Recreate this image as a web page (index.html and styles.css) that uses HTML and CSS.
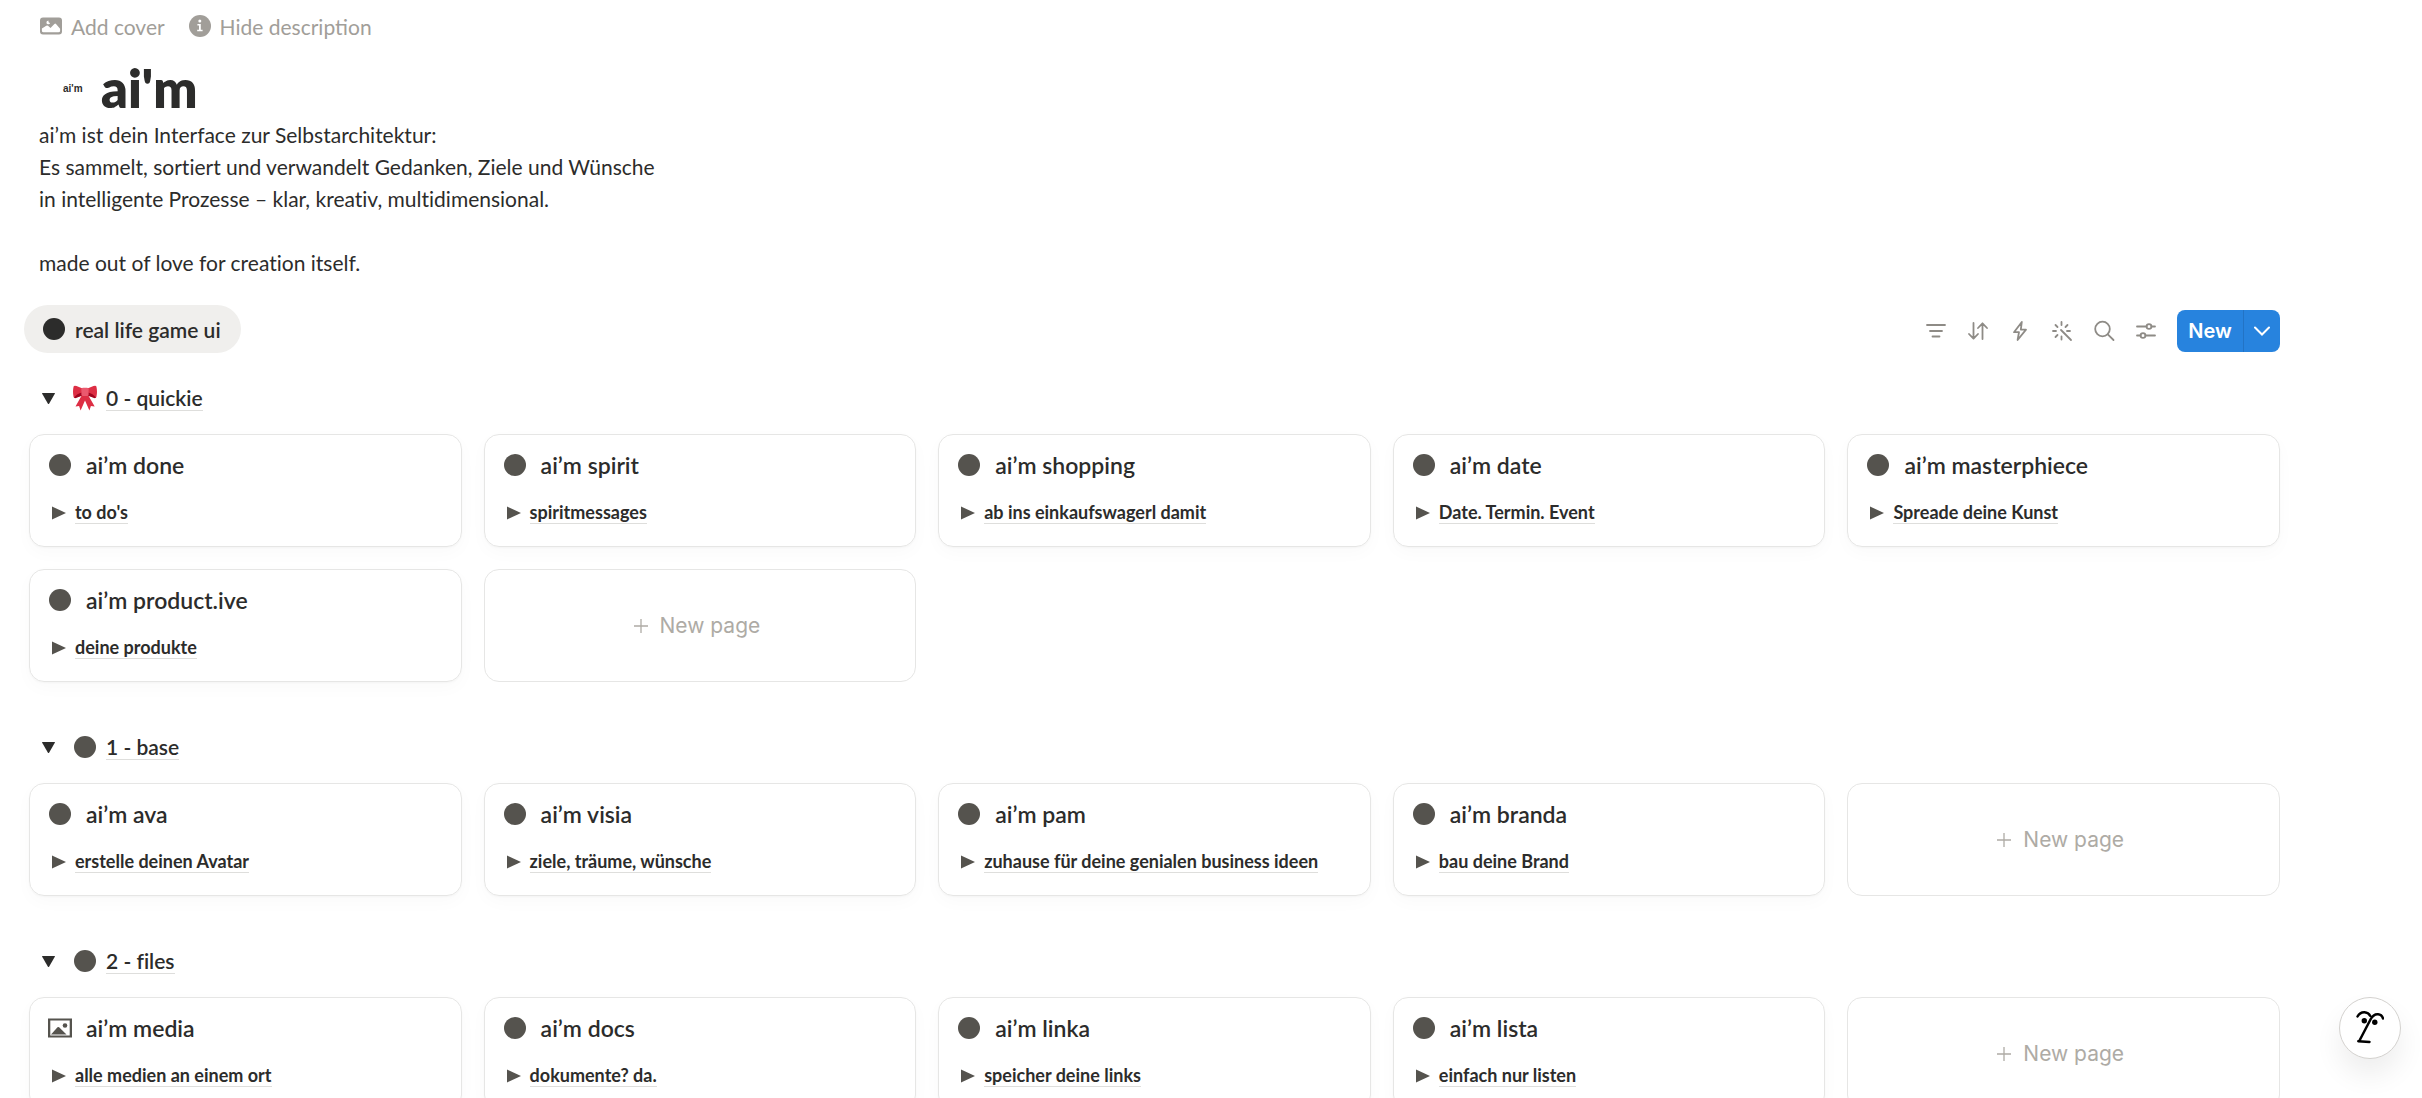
FILE: index.html
```
<!DOCTYPE html>
<html lang="de">
<head>
  <meta charset="UTF-8" />
  <meta name="viewport" content="width=device-width, initial-scale=1.0" />
  <title>ai'm</title>
  <link rel="stylesheet" href="styles.css">
</head>
<body>
  <!-- shared icons -->
  <svg class="sprite" aria-hidden="true">
    <symbol id="dot" viewBox="0 0 22 22"><circle cx="11" cy="11" r="11" /></symbol>
    <symbol id="play" viewBox="0 0 14 14"><path d="M0 0.5v13L14 7z" /></symbol>
    <symbol id="down" viewBox="0 0 14 14"><path d="M0.6 1h12.8q0.8 0 0.4 0.8L7.6 12.6q-0.6 0.8-1.2 0L0.2 1.8Q-0.2 1 0.6 1z" /></symbol>
    <symbol id="plus" viewBox="0 0 14 14"><path d="M7 0v14M0 7h14" fill="none" stroke="currentColor" stroke-width="1.3" /></symbol>
    <symbol id="picture" viewBox="0 0 24 20"><path fill-rule="evenodd" d="M0 0.5h24v19H0zM2.3 2.6v14.8h19.4V2.6z" /><path d="M3 16.5l6.5-7.2q0.8-0.7 1.6 0L18.5 16.5z" /><circle cx="17" cy="7.5" r="2.3" /></symbol>
  </svg>

  <main class="page">
    <div class="page-actions">
      <button class="ghost-btn">
        <svg width="22" height="18" viewBox="0 0 22 18"><path fill-rule="evenodd" d="M3 0.5h16a3 3 0 0 1 3 3v11a3 3 0 0 1-3 3H3a3 3 0 0 1-3-3v-11a3 3 0 0 1 3-3zM1.9 11.5v2.2q0 1.6 1.6 1.6h15q1.6 0 1.6-1.6v-1.9L16 7q-0.8-0.8-1.6 0L10.5 11 8 8.8q-0.9-0.7-1.7 0zM8.4 3.6q-2.2 0.5-2 2.3 0.4 1.5 2 1.4 1.2-0.1 1.8-1.3-2.2 0.2-1.8-2.4z" /></svg>
        Add cover
      </button>
      <button class="ghost-btn">
        <svg width="22" height="22" viewBox="0 0 22 22"><circle cx="11" cy="11" r="11" /><g fill="#fff"><circle cx="10.8" cy="6" r="1.5" /><path d="M8.4 8.9h3.4v5.8h1.8v1.6H8.2v-1.6H10v-4.2H8.4z" /></g></svg>
        Hide description
      </button>
    </div>

    <header class="page-header">
      <h1><span class="logo">ai'm</span>ai'm</h1>
      <p>ai’m ist dein Interface zur Selbstarchitektur:<br>
        Es sammelt, sortiert und verwandelt Gedanken, Ziele und Wünsche<br>
        in intelligente Prozesse – klar, kreativ, multidimensional.<br>
        <br>
        made out of love for creation itself.</p>
    </header>

    <div class="view-bar">
      <button class="tab"><svg class="dot"><use href="#dot" /></svg>real life game ui</button>
      <div class="tools">
        <button class="tool" aria-label="Filter"><svg viewBox="0 0 22 22"><path d="M2 5h18M5 11h12M7.5 16.5h7" /></svg></button>
        <button class="tool" aria-label="Sort"><svg viewBox="0 0 22 22"><path d="M6.5 3v15.5M2 14l4.5 4.7L11 14M15.5 19V3.3M11 8l4.5-4.7L20 8" /></svg></button>
        <button class="tool" aria-label="Automations"><svg viewBox="0 0 22 22"><path d="M12.8 2L5 12.2h5L8.6 20 17 9.6h-5.2z" /></svg></button>
        <button class="tool" aria-label="AI autofill"><svg viewBox="0 0 22 22"><path d="M10 10l10 10M10.5 2v3M10.5 16.5v3M2 11h3M16 11h3M4.5 5l2 2M16.5 5l-2 2M4.5 17l2-2" /></svg></button>
        <button class="tool" aria-label="Search"><svg viewBox="0 0 22 22"><circle cx="9.5" cy="9" r="7.3" /><path d="M14.8 14.3L20.5 20" /></svg></button>
        <button class="tool" aria-label="Settings"><svg viewBox="0 0 22 22"><path d="M2 6.5h9.5M16.5 6.5H20M2 15.5h3.5M10.5 15.5H20" /><circle cx="14" cy="6.5" r="2.4" /><circle cx="8" cy="15.5" r="2.4" /></svg></button>
        <div class="new-group">
          <button class="new-btn">New</button>
          <button class="new-more" aria-label="More"><svg viewBox="0 0 16 10"><path d="M1 1.5l7 7 7-7" /></svg></button>
        </div>
      </div>
    </div>

    <section class="group">
      <h2>
        <svg class="down"><use href="#down" /></svg>
        <svg class="bow" viewBox="0 0 24 26"><path fill="#dd2e44" d="M9.5 9L2.5 21.5l3.6-0.4L7.6 25.5 12 15.5 16.4 25.5l1.5-4.4 3.8 0.4L14.5 9z" /><path fill="#dd2e44" d="M0.6 1.4Q1.2 0.2 3.5 1L9 3.2h6L20.5 1q2.3-0.8 2.9 0.4 1.2 5.2 0 10.6-0.5 1.4-2.2 0.8L15 10.3H9l-6.2 2.5Q1 13.4 0.6 12 -0.6 6.6 0.6 1.4z" /><path fill="#a0041e" d="M1.2 12.6Q4 8.6 9 7.6v3.2l-6.2 2.3q-1 0.3-1.6-0.5zM22.8 12.6Q20 8.6 15 7.6v3.2l6.2 2.3q1 0.3 1.6-0.5z" /><rect x="8.4" y="2.8" width="7.2" height="8.2" rx="1.5" fill="#ea596e" /></svg>
        <a href="#">0 - quickie</a>
      </h2>
      <div class="cards">
        <article class="card">
          <h3><svg class="dot"><use href="#dot" /></svg>ai’m done</h3>
          <p><svg class="play"><use href="#play" /></svg><a href="#">to do's</a></p>
        </article>
        <article class="card">
          <h3><svg class="dot"><use href="#dot" /></svg>ai’m spirit</h3>
          <p><svg class="play"><use href="#play" /></svg><a href="#">spiritmessages</a></p>
        </article>
        <article class="card">
          <h3><svg class="dot"><use href="#dot" /></svg>ai’m shopping</h3>
          <p><svg class="play"><use href="#play" /></svg><a href="#">ab ins einkaufswagerl damit</a></p>
        </article>
        <article class="card">
          <h3><svg class="dot"><use href="#dot" /></svg>ai’m date</h3>
          <p><svg class="play"><use href="#play" /></svg><a href="#">Date. Termin. Event</a></p>
        </article>
        <article class="card">
          <h3><svg class="dot"><use href="#dot" /></svg>ai’m masterphiece</h3>
          <p><svg class="play"><use href="#play" /></svg><a href="#">Spreade deine Kunst</a></p>
        </article>
        <article class="card">
          <h3><svg class="dot"><use href="#dot" /></svg>ai’m product.ive</h3>
          <p><svg class="play"><use href="#play" /></svg><a href="#">deine produkte</a></p>
        </article>
        <button class="new-page"><svg class="plus"><use href="#plus" /></svg>New page</button>
      </div>
    </section>

    <section class="group">
      <h2>
        <svg class="down"><use href="#down" /></svg>
        <svg class="dot"><use href="#dot" /></svg>
        <a href="#">1 - base</a>
      </h2>
      <div class="cards">
        <article class="card">
          <h3><svg class="dot"><use href="#dot" /></svg>ai’m ava</h3>
          <p><svg class="play"><use href="#play" /></svg><a href="#">erstelle deinen Avatar</a></p>
        </article>
        <article class="card">
          <h3><svg class="dot"><use href="#dot" /></svg>ai’m visia</h3>
          <p><svg class="play"><use href="#play" /></svg><a href="#">ziele, träume, wünsche</a></p>
        </article>
        <article class="card">
          <h3><svg class="dot"><use href="#dot" /></svg>ai’m pam</h3>
          <p><svg class="play"><use href="#play" /></svg><a href="#">zuhause für deine genialen business ideen</a></p>
        </article>
        <article class="card">
          <h3><svg class="dot"><use href="#dot" /></svg>ai’m branda</h3>
          <p><svg class="play"><use href="#play" /></svg><a href="#">bau deine Brand</a></p>
        </article>
        <button class="new-page"><svg class="plus"><use href="#plus" /></svg>New page</button>
      </div>
    </section>

    <section class="group">
      <h2>
        <svg class="down"><use href="#down" /></svg>
        <svg class="dot"><use href="#dot" /></svg>
        <a href="#">2 - files</a>
      </h2>
      <div class="cards">
        <article class="card">
          <h3><svg class="picture"><use href="#picture" /></svg>ai’m media</h3>
          <p><svg class="play"><use href="#play" /></svg><a href="#">alle medien an einem ort</a></p>
        </article>
        <article class="card">
          <h3><svg class="dot"><use href="#dot" /></svg>ai’m docs</h3>
          <p><svg class="play"><use href="#play" /></svg><a href="#">dokumente? da.</a></p>
        </article>
        <article class="card">
          <h3><svg class="dot"><use href="#dot" /></svg>ai’m linka</h3>
          <p><svg class="play"><use href="#play" /></svg><a href="#">speicher deine links</a></p>
        </article>
        <article class="card">
          <h3><svg class="dot"><use href="#dot" /></svg>ai’m lista</h3>
          <p><svg class="play"><use href="#play" /></svg><a href="#">einfach nur listen</a></p>
        </article>
        <button class="new-page"><svg class="plus"><use href="#plus" /></svg>New page</button>
      </div>
    </section>
  </main>

  <button class="assistant" aria-label="Assistant">
    <svg viewBox="0 0 28 34"><path d="M1.5 6.5Q4 2 8.5 2.2q4 0.3 5.6 3.6M3 31.5L14.5 9.5Q17.5 3.8 22 4.2q4 0.4 5 4.3M2.3 31.2l11.2 0.8" /><circle cx="8.3" cy="10.8" r="2.7" /><circle cx="18.8" cy="12.3" r="2.7" /></svg>
  </button>
</body>
</html>
```
FILE: styles.css
```
:root {
  --text: #2c2c2b;
  --grey: #a19e99;
  --icon: #55534e;
  --line: #e6e6e5;
  --blue: #2783de;
}

* {
  box-sizing: border-box;
}

html, body {
  margin: 0;
  height: 100%;
  overflow: hidden;
  background: #fff;
  color: var(--text);
  font-family: Lato, "Open Sans", sans-serif;
  font-variant-ligatures: none;
}

h1, h2, h3, p {
  margin: 0;
}

button {
  border: none;
  padding: 0;
  background: none;
  font-family: inherit;
  color: inherit;
  cursor: pointer;
}

a {
  color: inherit;
  text-decoration: none;
  border-bottom: 1px solid #dededc;
}

svg {
  flex: none;
  fill: currentColor;
}

.sprite {
  display: none;
}

.dot { width: 22px; height: 22px; }
.play { width: 14px; height: 14px; }
.down { width: 13px; height: 13px; }
.plus { width: 14px; height: 14px; }
.picture { width: 24px; height: 20px; }
.bow { width: 24px; height: 26px; }

.page {
  height: 100vh;
  overflow-y: auto;
  scrollbar-width: none;
  padding: 10px 142px 40px 29px;
}

.page-actions {
  display: flex;
  gap: 24px;
  height: 32px;
  padding-left: 11px;
}

.ghost-btn {
  display: flex;
  align-items: center;
  gap: 9px;
  color: var(--grey);
  font-size: 21px;
}

.page-header {
  padding: 16px 0 0 10px;
}

h1 {
  display: flex;
  align-items: center;
  font-size: 52px;
  line-height: 61px;
  font-weight: 800;
}

.logo {
  width: 62px;
  padding-left: 24px;
  font-family: "Liberation Sans", sans-serif;
  font-size: 10px;
}

.page-header p {
  font-size: 21px;
  line-height: 32px;
}

.view-bar {
  display: flex;
  align-items: center;
  justify-content: space-between;
  margin-top: 26px;
}

.tab {
  display: flex;
  align-items: center;
  gap: 10px;
  height: 48px;
  margin-left: -5px;
  padding: 0 20px 0 19px;
  border-radius: 24px;
  background: #f0efed;
  font-size: 21px;
  font-weight: 600;
}

.tools {
  display: flex;
  align-items: center;
  gap: 20px;
  padding-top: 4px;
  color: #8e8b86;
}

.tool svg {
  display: block;
  width: 22px;
  height: 22px;
  fill: none;
  stroke: currentColor;
  stroke-width: 1.8;
  stroke-linecap: round;
  stroke-linejoin: round;
}

.new-group {
  display: flex;
  height: 42px;
  border-radius: 8px;
  overflow: hidden;
  background: var(--blue);
  color: #fff;
}

.new-btn {
  width: 67px;
  border-right: 1px solid #2273c5;
  font-family: Inter, sans-serif;
  font-size: 20px;
  font-weight: 600;
}

.new-more {
  width: 36px;
}

.new-more svg {
  width: 16px;
  height: 10px;
  fill: none;
  stroke: currentColor;
  stroke-width: 2;
  stroke-linecap: round;
}

.group {
  padding-top: 25px;
  margin-bottom: 20px;
}

h2 {
  display: flex;
  align-items: center;
  height: 40px;
  padding-left: 13px;
  font-size: 21px;
  line-height: 24px;
  font-weight: 600;
}

h2 .down {
  margin-right: 19px;
}

h2 .dot {
  color: var(--icon);
  margin-right: 10px;
}

h2 .bow {
  margin: 0 9px 0 -1px;
}

.cards {
  display: grid;
  grid-template-columns: repeat(5, 1fr);
  gap: 22px;
  margin-top: 16px;
}

.card,
.new-page {
  height: 113px;
  border: 1px solid var(--line);
  border-radius: 15px;
}

.card {
  padding: 14px 19px;
  box-shadow: 0 6px 18px rgba(0, 0, 0, 0.025), 0 1px 2px rgba(0, 0, 0, 0.03);
}

.card h3 {
  display: flex;
  align-items: center;
  height: 32px;
  gap: 15px;
  font-size: 23px;
  font-weight: 600;
}

.card h3 svg {
  color: var(--icon);
}

.card .picture {
  margin: 0 -1px;
}

.card p {
  display: flex;
  align-items: center;
  gap: 9px;
  margin-top: 20px;
  padding-left: 3px;
  font-size: 18px;
  line-height: 22px;
  font-weight: 700;
}

.card p svg {
  color: var(--icon);
}

.new-page {
  display: flex;
  align-items: center;
  justify-content: center;
  gap: 12px;
  padding-right: 6px;
  color: #aeaba5;
  font-family: Inter, sans-serif;
  font-size: 21px;
}

/* floating assistant button */
.assistant {
  position: fixed;
  right: 21px;
  bottom: 39px;
  width: 62px;
  height: 62px;
  border: 1px solid #d3d1ce;
  border-radius: 50%;
  background: #fff;
  box-shadow: 0 16px 28px rgba(0, 0, 0, 0.07);
  color: #000;
}

.assistant svg {
  width: 28px;
  height: 34px;
}

.assistant path {
  fill: none;
  stroke: currentColor;
  stroke-width: 2.5;
  stroke-linecap: round;
}
```
